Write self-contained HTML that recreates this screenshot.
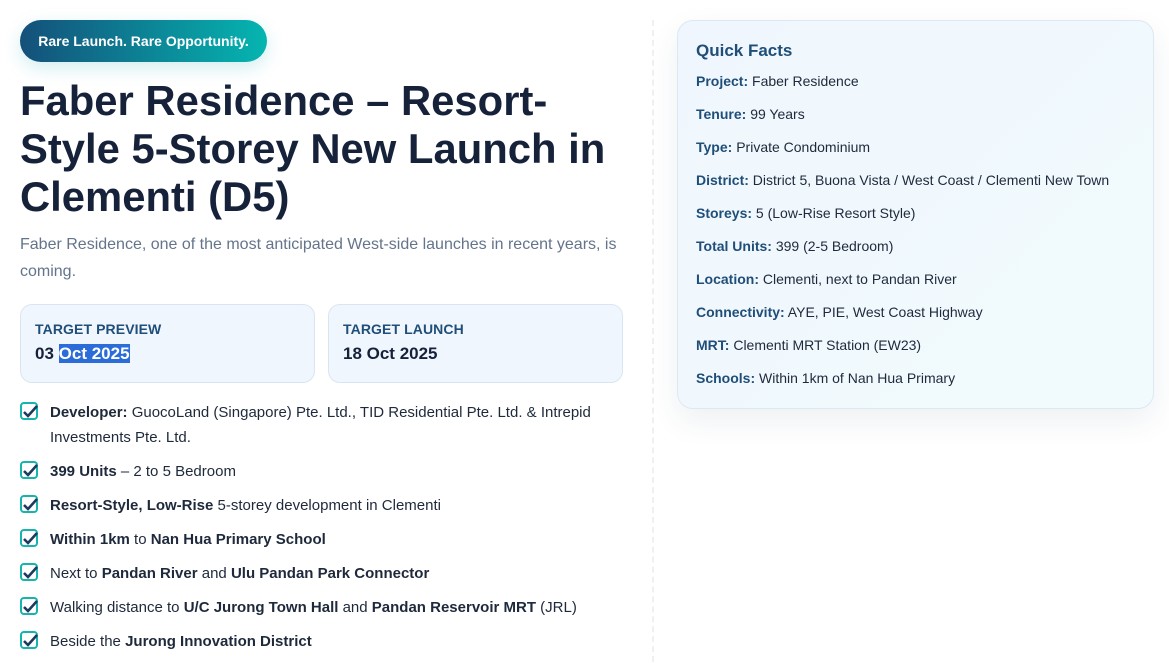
<!DOCTYPE html>
<html><head><meta charset="utf-8"><style>
*{margin:0;padding:0;box-sizing:border-box}
body{width:1169px;height:662px;overflow:hidden;background:#fff;font-family:"Liberation Sans",sans-serif;position:relative;color:#1e293b}
.pill{position:absolute;left:20px;top:20px;width:247px;height:42px;border-radius:21px;background:linear-gradient(90deg,#14507a,#05b5b0);color:#fff;font-weight:bold;font-size:14px;line-height:42px;text-align:center;box-shadow:0 6px 18px rgba(8,160,170,.18)}
h1{position:absolute;left:20px;top:77px;width:640px;font-size:41.8px;line-height:48px;font-weight:bold;color:#16213a;white-space:nowrap}
.sub{position:absolute;left:20px;top:231px;width:610px;font-size:16px;line-height:27px;color:#64748b}
.box{position:absolute;top:304px;width:295px;height:79px;border:1px solid #dbe5f1;border-radius:12px;background:#f0f6fd;padding:16px 14px}
.box .l{font-size:14px;font-weight:bold;color:#1f4e79;letter-spacing:.1px}
.box .v{font-size:17px;font-weight:bold;color:#16213a;margin-top:7px}
.hl{background:#2b6cd9;color:#fff}
ul{position:absolute;left:20px;top:400px;width:610px;list-style:none}
li{position:relative;padding-left:30px;font-size:15px;line-height:25px;color:#1e293b;margin-bottom:9px}
li svg{position:absolute;left:0;top:1px}
.vl{position:absolute;left:652px;top:20px;height:642px;border-left:2px dashed #eef0f3}
.card{position:absolute;left:677px;top:20px;width:477px;height:389px;border:1px solid #dde8f2;border-radius:16px;background:linear-gradient(135deg,#f0f6fd,#f1fbfd);padding:20px 18px;box-shadow:0 12px 30px rgba(30,60,90,.08)}
.card h2{font-size:17px;font-weight:bold;color:#1f4e79;margin-bottom:11px}
.card p{font-size:14px;line-height:18px;color:#1e293b;margin-bottom:15px}
.card p b{color:#1f4e79}
</style></head><body>
<div class="pill">Rare Launch. Rare Opportunity.</div>
<h1>Faber Residence – Resort-<br>Style 5-Storey New Launch in<br>Clementi (D5)</h1>
<div class="sub">Faber Residence, one of the most anticipated West-side launches in recent years, is coming.</div>
<div class="box" style="left:20px"><div class="l">TARGET PREVIEW</div><div class="v">03 <span class="hl">Oct 2025</span></div></div>
<div class="box" style="left:328px"><div class="l">TARGET LAUNCH</div><div class="v">18 Oct 2025</div></div>
<ul>
<li><svg width="20" height="20" viewBox="0 0 20 20"><rect x="1" y="2" width="16" height="16" rx="3" fill="none" stroke="#17b3ad" stroke-width="2"/><path d="M4 11l4 4 9-10" fill="none" stroke="#1e3a5f" stroke-width="2.6"/></svg><b>Developer:</b> GuocoLand (Singapore) Pte. Ltd., TID Residential Pte. Ltd. &amp; Intrepid Investments Pte. Ltd.</li>
<li><svg width="20" height="20" viewBox="0 0 20 20"><rect x="1" y="2" width="16" height="16" rx="3" fill="none" stroke="#17b3ad" stroke-width="2"/><path d="M4 11l4 4 9-10" fill="none" stroke="#1e3a5f" stroke-width="2.6"/></svg><b>399 Units</b> – 2 to 5 Bedroom</li>
<li><svg width="20" height="20" viewBox="0 0 20 20"><rect x="1" y="2" width="16" height="16" rx="3" fill="none" stroke="#17b3ad" stroke-width="2"/><path d="M4 11l4 4 9-10" fill="none" stroke="#1e3a5f" stroke-width="2.6"/></svg><b>Resort-Style, Low-Rise</b> 5-storey development in Clementi</li>
<li><svg width="20" height="20" viewBox="0 0 20 20"><rect x="1" y="2" width="16" height="16" rx="3" fill="none" stroke="#17b3ad" stroke-width="2"/><path d="M4 11l4 4 9-10" fill="none" stroke="#1e3a5f" stroke-width="2.6"/></svg><b>Within 1km</b> to <b>Nan Hua Primary School</b></li>
<li><svg width="20" height="20" viewBox="0 0 20 20"><rect x="1" y="2" width="16" height="16" rx="3" fill="none" stroke="#17b3ad" stroke-width="2"/><path d="M4 11l4 4 9-10" fill="none" stroke="#1e3a5f" stroke-width="2.6"/></svg>Next to <b>Pandan River</b> and <b>Ulu Pandan Park Connector</b></li>
<li><svg width="20" height="20" viewBox="0 0 20 20"><rect x="1" y="2" width="16" height="16" rx="3" fill="none" stroke="#17b3ad" stroke-width="2"/><path d="M4 11l4 4 9-10" fill="none" stroke="#1e3a5f" stroke-width="2.6"/></svg>Walking distance to <b>U/C Jurong Town Hall</b> and <b>Pandan Reservoir MRT</b> (JRL)</li>
<li><svg width="20" height="20" viewBox="0 0 20 20"><rect x="1" y="2" width="16" height="16" rx="3" fill="none" stroke="#17b3ad" stroke-width="2"/><path d="M4 11l4 4 9-10" fill="none" stroke="#1e3a5f" stroke-width="2.6"/></svg>Beside the <b>Jurong Innovation District</b></li>
</ul>
<div class="vl"></div>
<div class="card">
<h2>Quick Facts</h2>
<p><b>Project:</b> Faber Residence</p>
<p><b>Tenure:</b> 99 Years</p>
<p><b>Type:</b> Private Condominium</p>
<p><b>District:</b> District 5, Buona Vista / West Coast / Clementi New Town</p>
<p><b>Storeys:</b> 5 (Low-Rise Resort Style)</p>
<p><b>Total Units:</b> 399 (2-5 Bedroom)</p>
<p><b>Location:</b> Clementi, next to Pandan River</p>
<p><b>Connectivity:</b> AYE, PIE, West Coast Highway</p>
<p><b>MRT:</b> Clementi MRT Station (EW23)</p>
<p><b>Schools:</b> Within 1km of Nan Hua Primary</p>
</div>
</body></html>
